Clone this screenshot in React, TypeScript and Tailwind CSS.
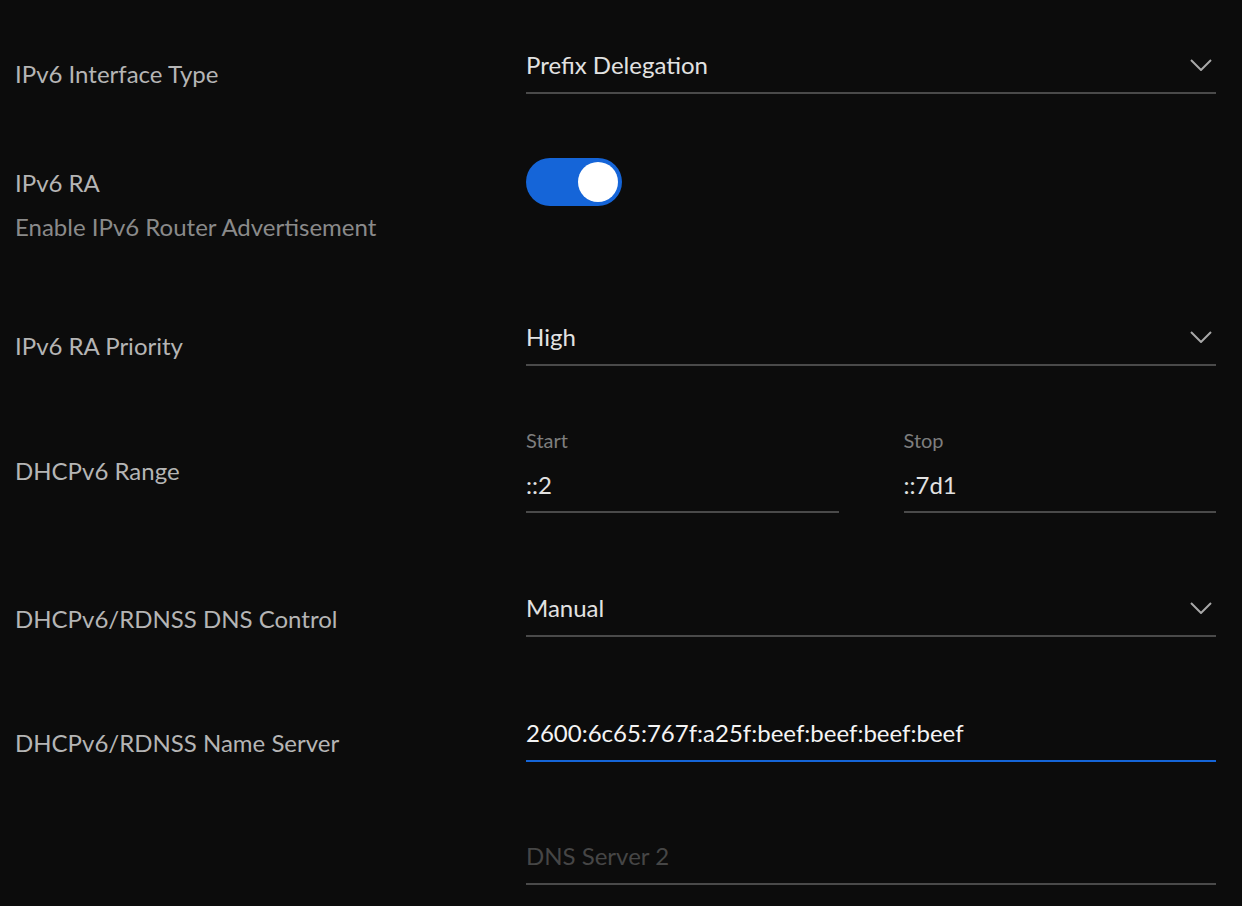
import React from "react";

const Chevron = () => (
  <svg width="22" height="12" viewBox="0 0 22 12" fill="none" className="shrink-0">
    <path d="M1 1l10 10L21 1" stroke="#a8a8a8" strokeWidth="2" />
  </svg>
);

function Select({ value }: { value: string }) {
  return (
    <div className="flex items-center justify-between border-b-2 border-[#4a4a4a] pb-[11px] pr-[4px]">
      <span className="text-[24px] leading-[32px] text-[#e2e2e2]">{value}</span>
      <Chevron />
    </div>
  );
}

function Label({ children, mt }: { children: React.ReactNode; mt: string }) {
  return (
    <div className={`w-[511px] shrink-0 text-[24px] leading-[32px] text-[#b5b5b5] ${mt}`}>{children}</div>
  );
}

export default function App() {
  return (
    <div
      className="min-h-[906px] w-full bg-[#0c0c0c] pl-[15px] pr-[26px]"
      style={{ fontFamily: "Lato, 'Open Sans', sans-serif" }}
    >
      {/* IPv6 Interface Type */}
      <div className="flex h-[130px] items-start">
        <Label mt="mt-[58px]">IPv6 Interface Type</Label>
        <div className="mt-[49px] flex-1">
          <Select value="Prefix Delegation" />
        </div>
      </div>

      {/* IPv6 RA */}
      <div className="flex h-[170px] items-start">
        <div className="mt-[37px] w-[511px] shrink-0">
          <div className="text-[24px] leading-[32px] text-[#b5b5b5]">IPv6 RA</div>
          <div className="mt-[12px] text-[24px] leading-[32px] text-[#8a8a8a]">
            Enable IPv6 Router Advertisement
          </div>
        </div>
        <div className="mt-[28px] flex-1">
          <button className="flex h-[48px] w-[96px] items-center justify-end rounded-full bg-[#1565d8] pr-[4px]">
            <span className="h-[40px] w-[40px] rounded-full bg-white" />
          </button>
        </div>
      </div>

      {/* IPv6 RA Priority */}
      <div className="flex h-[100px] items-start">
        <Label mt="mt-[30px]">IPv6 RA Priority</Label>
        <div className="mt-[21px] flex-1">
          <Select value="High" />
        </div>
      </div>

      {/* DHCPv6 Range */}
      <div className="flex h-[170px] items-start">
        <Label mt="mt-[55px]">DHCPv6 Range</Label>
        <div className="mt-[28px] flex flex-1 gap-[65px]">
          {[
            ["Start", "::2"],
            ["Stop", "::7d1"],
          ].map(([label, value]) => (
            <div key={label} className="flex-1">
              <div className="text-[20px] leading-[24px] text-[#7e7e7e]">{label}</div>
              <div className="mt-[17px] border-b-2 border-[#4a4a4a] pb-[10px] text-[24px] leading-[32px] text-[#e2e2e2]">
                {value}
              </div>
            </div>
          ))}
        </div>
      </div>

      {/* DNS Control */}
      <div className="flex h-[130px] items-start">
        <Label mt="mt-[33px]">DHCPv6/RDNSS DNS Control</Label>
        <div className="mt-[22px] flex-1">
          <Select value="Manual" />
        </div>
      </div>

      {/* Name Server */}
      <div className="flex h-[120px] items-start">
        <Label mt="mt-[27px]">DHCPv6/RDNSS Name Server</Label>
        <div className="mt-[17px] flex-1">
          <div className="border-b-2 border-[#1565d8] pb-[11px] text-[24px] leading-[32px] text-[#f4f4f4]">
            2600:6c65:767f:a25f:beef:beef:beef:beef
          </div>
        </div>
      </div>

      <div className="flex h-[86px] items-start">
        <div className="w-[511px] shrink-0" />
        <div className="mt-[20px] flex-1">
          <div className="border-b-2 border-[#4a4a4a] pb-[11px] text-[24px] leading-[32px] text-[#464646]">
            DNS Server 2
          </div>
        </div>
      </div>
    </div>
  );
}
